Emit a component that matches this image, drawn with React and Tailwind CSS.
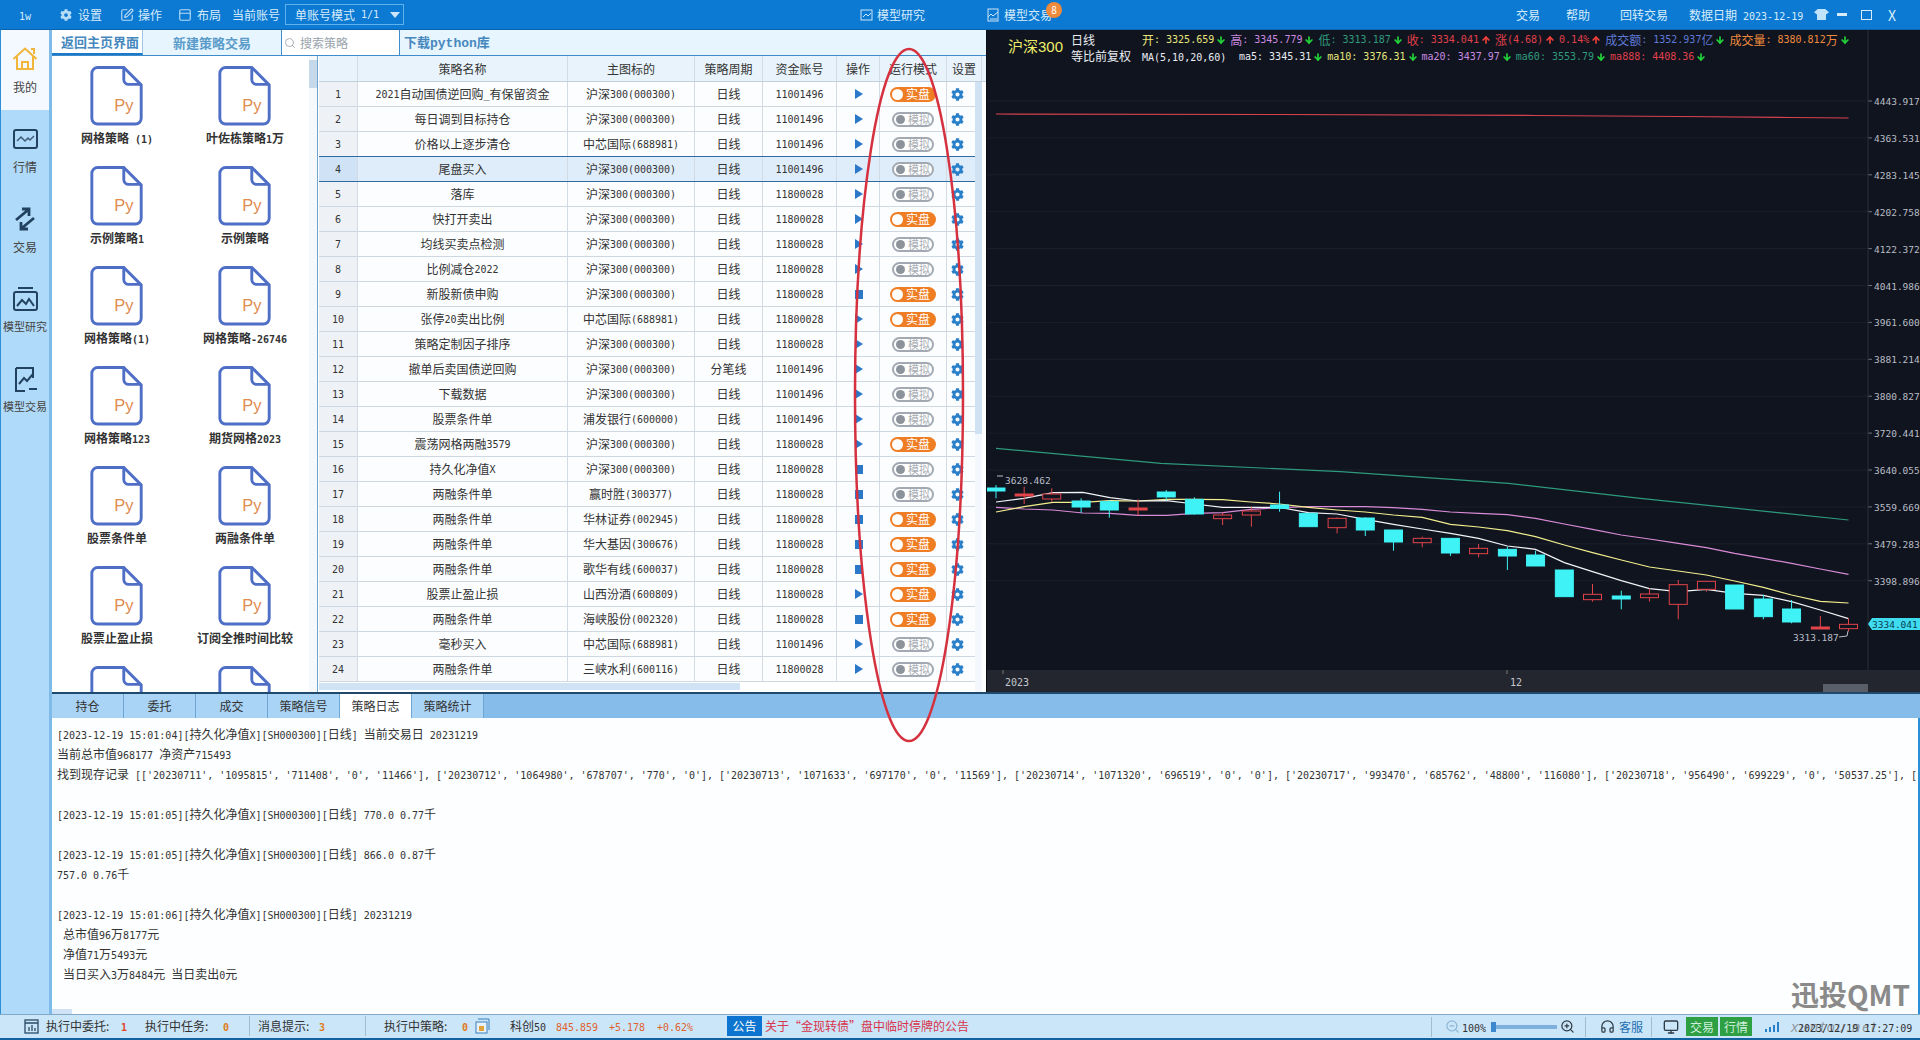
import React from 'react';
import { FaCog } from 'react-icons/fa';
import {
  ArrowDown,
  ArrowUp,
  Headphones,
  Monitor,
  PanelTop,
  Search,
  SquarePen,
  ZoomIn,
  ZoomOut,
} from 'lucide-react';

// SimSun-like metrics: latin runs are 6px wide per char, CJK 12px
const Mix = ({ text }) =>
  text
    .split(/([\x00-\x7f]+)/)
    .filter(Boolean)
    .map((part, i) =>
      /^[\x00-\x7f]/.test(part) ? (
        <span key={i} className="font-['DejaVu_Sans_Mono',monospace] text-[10px]">
          {part}
        </span>
      ) : (
        <span key={i}>{part}</span>
      )
    );

const HS = '沪深300(000300)';
const ZX = '中芯国际(688981)';
const A1 = '11001496';
const A2 = '11800028';

const rows = [
  ['2021自动国债逆回购_有保留资金', HS, '日线', A1, 'play', 'live'],
  ['每日调到目标持仓', HS, '日线', A1, 'play', 'sim'],
  ['价格以上逐步清仓', ZX, '日线', A1, 'play', 'sim'],
  ['尾盘买入', HS, '日线', A1, 'play', 'sim'],
  ['落库', HS, '日线', A2, 'play', 'sim'],
  ['快打开卖出', HS, '日线', A2, 'play', 'live'],
  ['均线买卖点检测', HS, '日线', A2, 'play', 'sim'],
  ['比例减仓2022', HS, '日线', A2, 'play', 'sim'],
  ['新股新债申购', HS, '日线', A2, 'stop', 'live'],
  ['张停20卖出比例', ZX, '日线', A2, 'play', 'live'],
  ['策略定制因子排序', HS, '日线', A2, 'play', 'sim'],
  ['撤单后卖国债逆回购', HS, '分笔线', A1, 'play', 'sim'],
  ['下载数据', HS, '日线', A1, 'play', 'sim'],
  ['股票条件单', '浦发银行(600000)', '日线', A1, 'play', 'sim'],
  ['震荡网格两融3579', HS, '日线', A2, 'play', 'live'],
  ['持久化净值X', HS, '日线', A2, 'stop', 'sim'],
  ['两融条件单', '赢时胜(300377)', '日线', A2, 'stop', 'sim'],
  ['两融条件单', '华林证券(002945)', '日线', A2, 'stop', 'live'],
  ['两融条件单', '华大基因(300676)', '日线', A2, 'stop', 'live'],
  ['两融条件单', '歌华有线(600037)', '日线', A2, 'stop', 'live'],
  ['股票止盈止损', '山西汾酒(600809)', '日线', A2, 'play', 'live'],
  ['两融条件单', '海峡股份(002320)', '日线', A2, 'stop', 'live'],
  ['毫秒买入', ZX, '日线', A1, 'play', 'sim'],
  ['两融条件单', '三峡水利(600116)', '日线', A2, 'play', 'sim'],
];

const strategies = [
  '网格策略 (1)',
  '叶佐栋策略1万',
  '示例策略1',
  '示例策略',
  '网格策略(1)',
  '网格策略-26746',
  '网格策略123',
  '期货网格2023',
  '股票条件单',
  '两融条件单',
  '股票止盈止损',
  '订阅全推时间比较',
  '',
  '',
];

const logLines = [
  '[2023-12-19 15:01:04][持久化净值X][SH000300][日线] 当前交易日 20231219',
  '当前总市值968177 净资产715493',
  "找到现存记录 [['20230711', '1095815', '711408', '0', '11466'], ['20230712', '1064980', '678707', '770', '0'], ['20230713', '1071633', '697170', '0', '11569'], ['20230714', '1071320', '696519', '0', '0'], ['20230717', '993470', '685762', '48800', '116080'], ['20230718', '956490', '699229', '0', '50537.25'], [",
  '',
  '[2023-12-19 15:01:05][持久化净值X][SH000300][日线] 770.0 0.77千',
  '',
  '[2023-12-19 15:01:05][持久化净值X][SH000300][日线] 866.0 0.87千',
  '757.0 0.76千',
  '',
  '[2023-12-19 15:01:06][持久化净值X][SH000300][日线] 20231219',
  ' 总市值96万8177元',
  ' 净值71万5493元',
  ' 当日买入3万8484元 当日卖出0元',
];

const prices = [
  '4443.917', '4363.531', '4283.145', '4202.758', '4122.372', '4041.986', '3961.600', '3881.214',
  '3800.827', '3720.441', '3640.055', '3559.669', '3479.283', '3398.896',
];

// candle data: x, wick top, body top, body bottom, wick bottom, cyan?
const candles = [
  [25, 165, 174, 183, 205, 1], [72, 170, 192, 197, 222, 0], [118, 175, 192, 207, 215, 0],
  [167, 205, 213, 231, 248, 1], [214, 210, 215, 240, 263, 1], [262, 208, 234, 239, 257, 0],
  [309, 180, 186, 201, 212, 1], [356, 202, 208, 252, 254, 1], [403, 248, 255, 266, 285, 0],
  [451, 232, 243, 255, 290, 0], [498, 185, 225, 235, 245, 1], [546, 250, 250, 290, 290, 1],
  [594, 262, 265, 293, 310, 0], [641, 262, 264, 300, 318, 1], [688, 300, 300, 336, 362, 1],
  [736, 320, 325, 338, 352, 0], [783, 325, 325, 369, 378, 1], [830, 342, 355, 371, 382, 0],
  [878, 350, 358, 378, 420, 1], [925, 362, 375, 408, 408, 1], [973, 420, 420, 500, 500, 1],
  [1020, 462, 493, 509, 515, 0], [1068, 482, 498, 507, 538, 1], [1115, 475, 492, 503, 515, 0],
  [1163, 450, 464, 523, 568, 0], [1210, 454, 454, 478, 485, 0], [1257, 465, 465, 537, 537, 1],
  [1305, 495, 507, 560, 568, 1], [1352, 510, 537, 576, 580, 1], [1400, 558, 591, 597, 597, 0],
  [1447, 565, 583, 596, 604, 0],
];

const xs = [25, 72, 120, 170, 215, 262, 310, 356, 403, 450, 498, 546, 594, 641, 688, 736, 783, 830, 878, 925, 973, 1020, 1068, 1115, 1163, 1210, 1257, 1305, 1352, 1400, 1447];
const ma5 = [216, 205, 188, 187, 203, 213, 212, 222, 232, 232, 232, 248, 252, 268, 283, 297, 310, 325, 348, 358, 398, 425, 452, 476, 485, 478, 490, 496, 515, 540, 566];
const ma10 = [246, 230, 217, 217, 212, 213, 208, 208, 209, 216, 222, 232, 240, 246, 255, 262, 283, 291, 302, 320, 345, 368, 390, 411, 423, 435, 453, 472, 495, 514, 519];
const ma20 = [232, 237, 240, 249, 250, 256, 256, 250, 248, 238, 233, 230, 230, 230, 233, 238, 246, 250, 254, 265, 282, 298, 315, 327, 340, 353, 370, 385, 400, 417, 433];

const px = x => 980 + x / 1.668;
const py = y => 430 + y / 3;
const linePoints = ys => xs.map((x, i) => `${px(x)},${py(ys[i])}`).join(' ');
const ma60Points = [[25, 55], [300, 100], [600, 125], [880, 160], [1100, 205], [1447, 270]]
  .map(([x, y]) => `${px(x)},${py(y)}`)
  .join(' ');

const PyFile = ({ showLabel }) => (
  <svg width="54" height="60" viewBox="0 0 54 62" fill="none">
    <path
      d="M7 1.5h27l18 18V54a6 6 0 0 1-6 6H7a6 6 0 0 1-6-6V7.500a6 6 0 0 1 6-6z"
      stroke="#4f6ec6"
      strokeWidth="3"
      fill="#fff"
    />
    <path d="M34 2v12a5 5 0 0 0 5 5h13" stroke="#4f6ec6" strokeWidth="3" />
    {showLabel && (
      <text x="34" y="46" textAnchor="middle" fontSize="17" fontFamily="Liberation Sans" fill="#df8b4e">
        Py
      </text>
    )}
  </svg>
);

const Toggle = ({ live }) =>
  live ? (
    <div className="w-[46px] h-[15px] rounded-full bg-[#ef7d24] flex items-center pl-[2px] gap-[3px] text-white leading-none">
      <span className="w-[11px] h-[11px] rounded-full bg-white" />
      <span>实盘</span>
    </div>
  ) : (
    <div className="w-[42px] h-[15px] rounded-full bg-white border-2 border-[#a2a9b2] flex items-center pl-[2px] gap-[3px] text-[#a8adb4] leading-none">
      <span className="w-[9px] h-[9px] rounded-full bg-[#8d939b]" />
      <span className="text-[11px]">模拟</span>
    </div>
  );

const TableRow = ({ row, index }) => {
  const [name, symbol, period, account, op, mode] = row;
  const selected = index === 3;
  const cell = `flex items-center justify-center border-r border-[#d3dbe4] ${
    selected ? 'bg-[#dfedfb]' : 'bg-[#fbfdff]'
  }`;
  return (
    <div
      className={`grid grid-cols-[39px_210px_127px_68px_74px_43px_67px_28px] h-[25px] text-[#333] border-b ${
        selected ? 'border-[#2f6aa0] shadow-[0_-1px_0_#2f6aa0]' : 'border-[#cfd7e0]'
      }`}
    >
      <div className={`flex items-center justify-center border-r border-[#d3dbe4] ${selected ? 'bg-[#cfe2f6]' : 'bg-[#eef2f7]'}`}>
        <Mix text={String(index + 1)} />
      </div>
      <div className={cell}><Mix text={name} /></div>
      <div className={cell}><Mix text={symbol} /></div>
      <div className={cell}><Mix text={period} /></div>
      <div className={cell}><Mix text={account} /></div>
      <div className={cell}>
        {op === 'play' ? (
          <span className="ml-[2px] w-0 h-0 border-y-[5px] border-y-transparent border-l-[8px] border-l-[#2b78c9]" />
        ) : (
          <span className="ml-[2px] w-[8px] h-[9px] bg-[#2b78c9]" />
        )}
      </div>
      <div className={cell}><Toggle live={mode === 'live'} /></div>
      <div className={`flex items-center pl-[4px] ${selected ? 'bg-[#dfedfb]' : 'bg-[#fbfdff]'}`}>
        <FaCog className="text-[#2a7fc9]" size={13} />
      </div>
    </div>
  );
};

const Quote = ({ text, color, dir }) => (
  <span className={`flex items-center ${color}`}>
    <Mix text={text} />
    {dir === 'down' && <ArrowDown size={10} strokeWidth={4} className="text-[#22d63a] ml-[2px]" />}
    {dir === 'up' && <ArrowUp size={10} strokeWidth={4} className="text-[#f0413a] ml-[2px]" />}
  </span>
);

const RailItem = ({ label, active, small, children }) => (
  <div className={`h-[80px] flex flex-col items-center pt-[14px] gap-[7px] text-[#444] ${active ? 'bg-[#f3f9fe]' : ''}`}>
    <div className="h-[30px] flex items-center justify-center">{children}</div>
    <span className={`leading-none ${small ? 'text-[11px]' : ''}`}>{label}</span>
  </div>
);

const Chart = () => (
  <svg className="absolute inset-0" width="934" height="662" viewBox="986 30 934 662">
    {prices.map((p, i) => (
      <g key={p}>
        <line x1="986" x2="1867" y1={101 + i * 36.9} y2={101 + i * 36.9} stroke="#1a1f2c" />
        <line x1="1867" x2="1871" y1={101 + i * 36.9} y2={101 + i * 36.9} stroke="#6c717b" />
        <text x="1873" y={105 + i * 36.9} fontSize="9.500" fontFamily="DejaVu Sans Mono" fill="#b9bdc5">
          {p}
        </text>
      </g>
    ))}
    <line x1="1867" x2="1867" y1="30" y2="670" stroke="#2a2e39" />
    <polyline
      points={`${px(25)},114 ${px(500)},114.500 ${px(925)},115.500 ${px(1165)},116.500 ${px(1350)},117.500 ${px(1447)},118`}
      fill="none"
      stroke="#d8424f"
      strokeWidth="1.200"
    />
    <polyline points={ma60Points} fill="none" stroke="#2e9a7c" strokeWidth="1.200" />
    <polyline points={linePoints(ma20)} fill="none" stroke="#d98bd8" strokeWidth="1.200" />
    <polyline points={linePoints(ma10)} fill="none" stroke="#f2ee8e" strokeWidth="1.200" />
    <polyline points={linePoints(ma5)} fill="none" stroke="#f2f4f6" strokeWidth="1.200" />
    {candles.map(([x, wt, bt, bb, wb, cyan]) => {
      const color = cyan ? '#3ef2f5' : '#e2444a';
      const thin = bb - bt < 8;
      return (
        <g key={x}>
          <line x1={px(x)} x2={px(x)} y1={py(wt)} y2={py(bt)} stroke={color} />
          <line x1={px(x)} x2={px(x)} y1={py(bb)} y2={py(wb)} stroke={color} />
          <rect
            x={px(x) - 9}
            y={py(bt)}
            width="18"
            height={Math.max((bb - bt) / 3, 2)}
            fill={cyan || thin ? color : '#10141f'}
            stroke={color}
          />
        </g>
      );
    })}
    <text x="1004" y="484" fontSize="9.500" fontFamily="DejaVu Sans Mono" fill="#b9bdc5">3628.462</text>
    <text x="1792" y="641" fontSize="9.500" fontFamily="DejaVu Sans Mono" fill="#b9bdc5">3313.187</text>
    <polyline points="1838,637 1846,636 1847,631" fill="none" stroke="#b9bdc5" />
    <polyline points="996,476 1002,476" fill="none" stroke="#b9bdc5" />
    <rect x="986" y="670" width="934" height="22" fill="#23262f" />
    <line x1="1002" x2="1002" y1="670" y2="674" stroke="#777" />
    <line x1="1506" x2="1506" y1="670" y2="674" stroke="#777" />
    <text x="1004" y="686" fontSize="10" fontFamily="DejaVu Sans Mono" fill="#c3c6cc">2023</text>
    <text x="1509" y="686" fontSize="10" fontFamily="DejaVu Sans Mono" fill="#c3c6cc">12</text>
    <rect x="1822" y="684" width="45" height="8" fill="#5a5e69" />
    <path d="M1867 624l4-6h49v12h-49z" fill="#3fdcf0" />
    <text x="1871" y="628" fontSize="9.500" fontFamily="DejaVu Sans Mono" fill="#0b3d55">3334.041</text>
  </svg>
);

const App = () => {
  return (
    <div className="relative w-[1920px] h-[1040px] overflow-hidden flex flex-col bg-white text-[12px] whitespace-pre font-['Noto_Sans_CJK_SC','Liberation_Sans',sans-serif]">
      {/* Title bar */}
      <div className="h-[30px] shrink-0 bg-[#0c79d2] border-b border-[#0a64ad] flex items-center text-[#d7ecfb]">
        <span className="ml-[19px] w-[41px]"><Mix text="1w" /></span>
        <FaCog size={12} className="text-[#b6dcf7]" />
        <span className="ml-[6px] w-[42px]">设置</span>
        <SquarePen size={14} className="text-[#b6dcf7]" />
        <span className="ml-[4px] w-[40px]">操作</span>
        <PanelTop size={14} className="text-[#b6dcf7]" />
        <span className="ml-[5px] w-[35px]">布局</span>
        <span className="w-[53px]">当前账号</span>
        <div className="w-[119px] h-[21px] border border-[#5fb2ec] flex items-center pl-[9px]">
          <Mix text="单账号模式 1/1" />
          <span className="ml-[11px] w-0 h-0 border-x-[5px] border-x-transparent border-t-[6px] border-t-[#cde7fa]" />
        </div>
        <svg className="ml-[456px]" width="13" height="13" viewBox="0 0 13 13" fill="none" stroke="#cde7fa">
          <rect x="1" y="2" width="11" height="10" />
          <path d="M3 9l3-3 2 2 3-3" />
        </svg>
        <span className="ml-[4px] w-[110px]">模型研究</span>
        <svg width="13" height="14" viewBox="0 0 13 14" fill="none" stroke="#cde7fa">
          <rect x="1" y="1" width="10" height="12" />
          <path d="M1 9l3-3 2 2 5-4M3 11h7" />
        </svg>
        <span className="relative ml-[4px] w-[512px]">
          模型交易
          <span className="absolute left-[42px] top-[-4px] w-[16px] h-[16px] rounded-full bg-[#ee8a3c] text-[#fff] text-[10px] leading-[16px] text-center">8</span>
        </span>
        <span className="w-[50px]">交易</span>
        <span className="w-[54px]">帮助</span>
        <span className="w-[69px]">回转交易</span>
        <span className="w-[125px]"><Mix text="数据日期 2023-12-19" /></span>
        <span className="w-[15px] h-[11px] bg-[#bfe3fb] [clip-path:polygon(25%_0,75%_0,100%_30%,80%_50%,80%_100%,20%_100%,20%_50%,0_30%)]" />
        <span className="ml-[8px] w-[10px] h-[3px] bg-[#d7ecfb]" />
        <span className="ml-[14px] w-[11px] h-[10px] border border-[#d7ecfb]" />
        <span className="ml-[16px] text-[14px] leading-none">X</span>
      </div>

      <div className="flex-1 min-h-0 flex">
        {/* Left rail */}
        <div className="w-[52px] shrink-0 bg-[#b0daf9] border-l border-[#2d8fd8] border-r-[3px] border-r-[#7fbbe8]">
          <RailItem label="我的" active>
            <svg width="26" height="26" viewBox="0 0 26 26" fill="none" stroke="#f2b53c" strokeWidth="2">
              <path d="M1.500 13L13 2.500 24.500 13M5 10.500V23h16V10.500M10 23v-7h6v7" />
              <path d="M19 3h3v5" />
            </svg>
          </RailItem>
          <RailItem label="行情">
            <svg width="25" height="20" viewBox="0 0 25 20" fill="none">
              <rect x="1" y="1" width="23" height="18" rx="2" stroke="#22435f" strokeWidth="2" />
              <path d="M4 12l4-4 4 4 3-3 2 2 4-4" stroke="#3f5d78" strokeWidth="1.500" />
            </svg>
          </RailItem>
          <RailItem label="交易">
            <svg width="24" height="24" viewBox="0 0 24 24" fill="none" stroke="#22435f" strokeWidth="2.800">
              <path d="M3 13L15 3M9 2h7v7" />
              <path d="M21 11L9 21M15 22H8v-7" />
            </svg>
          </RailItem>
          <RailItem label="模型研究" small>
            <svg width="25" height="24" viewBox="0 0 25 24" fill="none" stroke="#22435f" strokeWidth="2">
              <rect x="1" y="5" width="23" height="18" rx="2" />
              <path d="M5 1h15M4 19l5-6 4 4 3-5 5 7" />
            </svg>
          </RailItem>
          <RailItem label="模型交易" small>
            <svg width="25" height="25" viewBox="0 0 25 25" fill="none" stroke="#22435f" strokeWidth="2">
              <path d="M3 1h17v10M3 1v23h9" />
              <path d="M6 17l5-6 3 3 6-7M16 22h8" />
            </svg>
          </RailItem>
        </div>

        <div className="flex-1 min-w-0 flex flex-col">
          <div className="h-[662px] shrink-0 flex">
            {/* Strategy panel */}
            <div className="w-[934px] shrink-0 flex flex-col bg-white">
              <div className="h-[26px] shrink-0 flex items-center bg-[#e6f5fe] border-b border-[#3f8ccc] text-[#4688bd] text-[13px] font-bold">
                <div className="w-[91px] h-full flex items-center pl-[9px] bg-white border-b-2 border-[#1c79c8] border-r border-r-[#9cc3e2]">返回主页界面</div>
                <span className="ml-[30px] w-[108px] text-[#5a9bc9]">新建策略交易</span>
                <div className="w-[119px] h-full bg-white border-x border-[#3f8ccc] flex items-center pl-[2px] gap-[4px] text-[12px] text-[#9aa3ab] font-normal">
                  <Search size={12} className="text-[#a8b0b8]" />
                  搜索策略
                </div>
                <span className="ml-[4px]">
                  下载<span className="font-['Liberation_Mono',monospace]">python</span>库
                </span>
              </div>
              <div className="flex-1 min-h-0 flex">
                <div className="w-[266px] shrink-0 flex border-r border-[#6ea4d0] overflow-hidden">
                  <div className="flex-1 min-w-0 grid grid-cols-2 content-start pt-[10px] pl-[1px] auto-rows-[100px]">
                    {strategies.map((name, i) => (
                      <div key={i} className="flex flex-col items-center">
                        <PyFile showLabel={name !== ''} />
                        {name && (
                          <span className="mt-[3px] leading-[18px] font-bold text-[#333]"><Mix text={name} /></span>
                        )}
                      </div>
                    ))}
                  </div>
                  <div className="w-[8px] shrink-0 bg-[#f6f9fc] pt-[4px]">
                    <div className="h-[28px] bg-[#c6d9ea]" />
                  </div>
                </div>
                <div className="w-[668px] shrink-0 flex flex-col ml-[1px] min-h-0">
                  <div className="grid grid-cols-[39px_210px_127px_68px_74px_43px_67px_35px] h-[26px] shrink-0 bg-[#e9f3fb] border-b border-[#c3d0dc] text-[#333]">
                    {['', '策略名称', '主图标的', '策略周期', '资金账号', '操作', '运行模式', '设置'].map((h, i) => (
                      <div key={i} className="flex items-center justify-center border-r border-[#d3dbe4]">{h}</div>
                    ))}
                  </div>
                  <div className="flex-1 min-h-0 flex">
                    <div className="w-[656px] shrink-0 flex flex-col">
                      {rows.map((row, i) => (
                        <TableRow key={i} row={row} index={i} />
                      ))}
                      <div className="h-[7px] mt-[1px] w-[421px] bg-[#cfe3f5]" />
                    </div>
                    <div className="w-[7px] shrink-0 bg-[#f4f8fc]">
                      <div className="h-[352px] bg-[#cfe3f5]" />
                    </div>
                  </div>
                </div>
              </div>
            </div>

            {/* Chart */}
            <div className="relative flex-1 min-w-0 bg-[#10141f] border-l border-[#0a0c12]">
              <Chart />
              <div className="relative flex leading-[16px] pt-[2px]">
                <span className="ml-[21px] w-[63px] mt-[6px] text-[15px] text-[#ecec6a]"><Mix text="沪深" /><span className="font-['Liberation_Sans']">300</span></span>
                <div className="w-[71px] text-[#e9edf2] flex flex-col">
                  <span>日线</span>
                  <span>等比前复权</span>
                </div>
                <div className="flex flex-col">
                  <div className="flex gap-[4px]">
                    <Quote text="开: 3325.659" color="text-[#e6e67c]" dir="down" />
                    <Quote text="高: 3345.779" color="text-[#c98ae0]" dir="down" />
                    <Quote text="低: 3313.187" color="text-[#2f9a7c]" dir="down" />
                    <Quote text="收: 3334.041" color="text-[#e0404a]" dir="up" />
                    <Quote text="涨(4.68)" color="text-[#e0404a]" dir="up" />
                    <Quote text="0.14%" color="text-[#e0404a]" dir="up" />
                    <Quote text="成交额: 1352.937亿" color="text-[#5f7ad8]" dir="down" />
                    <Quote text="成交量: 8380.812万" color="text-[#ee8a3c]" dir="down" />
                  </div>
                  <div className="flex gap-[4px]">
                    <span className="w-[93px] text-[#e9edf2]"><Mix text="MA(5,10,20,60)" /></span>
                    <Quote text="ma5: 3345.31" color="text-[#e9edf2]" dir="down" />
                    <Quote text="ma10: 3376.31" color="text-[#e6e67c]" dir="down" />
                    <Quote text="ma20: 3437.97" color="text-[#c98ae0]" dir="down" />
                    <Quote text="ma60: 3553.79" color="text-[#2f9a7c]" dir="down" />
                    <Quote text="ma888: 4408.36" color="text-[#e0404a]" dir="down" />
                  </div>
                </div>
              </div>
            </div>
          </div>

          {/* Bottom tabs */}
          <div className="h-[26px] shrink-0 flex bg-[#86bce9] border-t-2 border-[#1f4a6e] text-[#333]">
            {['持仓', '委托', '成交', '策略信号', '策略日志', '策略统计'].map((tab, i) => (
              <div
                key={tab}
                className={`w-[72px] pb-[1px] flex items-center justify-center border-r border-[#6fa6d4] ${
                  i === 4 ? 'bg-white' : 'bg-[#a9d4f6]'
                }`}
              >
                {tab}
              </div>
            ))}
          </div>

          {/* Log */}
          <div className="relative flex-1 min-h-0 overflow-hidden bg-[#fcfeff] pl-[5px] pt-[6px] text-[#333] leading-[20px] border-r-2 border-[#2d8fd8]">
            {logLines.map((line, i) => (
              <div key={i} className="h-[20px]"><Mix text={line} /></div>
            ))}
            <div className="absolute left-0 bottom-0 w-[20px] h-[5px] bg-[#cfe3f5]" />
            <div className="absolute right-[8px] bottom-[6px] text-[#8a8a8a] text-[28px] font-bold leading-none">迅投QMT</div>
          </div>
        </div>
      </div>

      {/* Status bar */}
      <div className="relative h-[26px] shrink-0 pb-[1px] bg-[#cbe6f9] border-t border-[#7fa9c6] border-b-2 border-b-[#11629f] flex items-center text-[#333]">
        <svg className="ml-[24px]" width="15" height="15" viewBox="0 0 15 15" fill="none" stroke="#2a4a66" strokeWidth="1.300">
          <rect x="1" y="1" width="13" height="13" />
          <path d="M1 4h13M5 12V8M8 12V6M11 12V9" />
        </svg>
        <span className="ml-[7px] w-[75px]">执行中委托:</span>
        <span className="w-[24px] text-[#e0452b] font-bold"><Mix text="1" /></span>
        <span className="w-[78px]">执行中任务:</span>
        <span className="w-[26px] text-[#e07a1c] font-bold"><Mix text="0" /></span>
        <span className="w-[9px] h-[20px] border-l border-[#a5bccd]" />
        <span className="w-[61px]">消息提示:</span>
        <span className="w-[46px] text-[#e07a1c] font-bold"><Mix text="3" /></span>
        <span className="w-[19px] h-[20px] border-l border-[#a5bccd]" />
        <span className="w-[78px]">执行中策略:</span>
        <span className="w-[13px] text-[#e07a1c] font-bold"><Mix text="0" /></span>
        <svg width="15" height="16" viewBox="0 0 15 16" fill="none" stroke="#3d7fb8">
          <rect x="1" y="4" width="11" height="11" fill="#e6f2fb" />
          <path d="M3 1h11v11" />
          <rect x="4" y="8" width="5" height="5" fill="#e0a23c" stroke="none" />
        </svg>
        <span className="ml-[20px] w-[46px]"><Mix text="科创50" /></span>
        <span className="w-[53px] text-[#e0622c]"><Mix text="845.859" /></span>
        <span className="w-[48px] text-[#e0622c]"><Mix text="+5.178" /></span>
        <span className="w-[70px] text-[#e0622c]"><Mix text="+0.62%" /></span>
        <span className="w-[35px] h-[20px] bg-[#0d74cf] text-white flex items-center justify-center">公告</span>
        <span className="ml-[3px] text-[#d9344a]">关于“金现转债”盘中临时停牌的公告</span>

        <span className="absolute left-[1431px] top-[2px] h-[20px] border-l border-[#a5bccd]" />
        <div className="absolute left-[1445px] top-0 h-full flex items-center">
          <ZoomOut size={15} className="text-[#8fb6d6]" />
          <span className="ml-[2px] w-[29px]"><Mix text="100%" /></span>
          <div className="relative w-[66px] h-[4px] bg-[#7db0dc]">
            <span className="absolute left-0 top-[-3px] w-[5px] h-[10px] bg-[#3e88d0]" />
          </div>
          <ZoomIn size={15} className="ml-[3px] text-[#2f3b46]" />
          <span className="ml-[10px] h-[20px] border-l border-[#a5bccd]" />
          <Headphones size={15} className="ml-[14px] text-[#2f3b46]" />
          <span className="ml-[4px] w-[32px] text-[#1f6fb0]">客服</span>
          <span className="h-[20px] border-l border-[#a5bccd]" />
          <Monitor size={16} className="ml-[11px] text-[#2f3b46]" />
          <span className="ml-[7px] w-[32px] h-[19px] bg-[#2ea043] text-[#cfeedd] flex items-center justify-center">交易</span>
          <span className="ml-[2px] w-[32px] h-[19px] bg-[#2ea043] text-[#cfeedd] flex items-center justify-center">行情</span>
          <div className="ml-[13px] w-[14px] h-[10px] flex items-end gap-[2px]">
            <span className="w-[2px] h-[3px] bg-[#2a7fc9]" />
            <span className="w-[2px] h-[5px] bg-[#2a7fc9]" />
            <span className="w-[2px] h-[7px] bg-[#2a7fc9]" />
            <span className="w-[2px] h-[10px] bg-[#2a7fc9]" />
          </div>
        </div>
        <span className="absolute left-[1791px] top-[1px] text-[#8f979e] italic text-[15px] leading-[20px] font-['Open_Sans',sans-serif] tracking-[1.500px]">xuntou.net</span>
        <span className="absolute left-[1798px] top-[2px] leading-[20px]"><Mix text="2023/12/19 17:27:09" /></span>
      </div>

      {/* Hand-drawn annotation over the screenshot */}
      <svg className="absolute left-[850px] top-[45px] pointer-events-none" width="120" height="700" viewBox="0 0 120 700" fill="none">
        <ellipse cx="59" cy="350" rx="54" ry="346" stroke="#d5313f" strokeWidth="2.500" />
      </svg>
    </div>
  );
};

export default App;
